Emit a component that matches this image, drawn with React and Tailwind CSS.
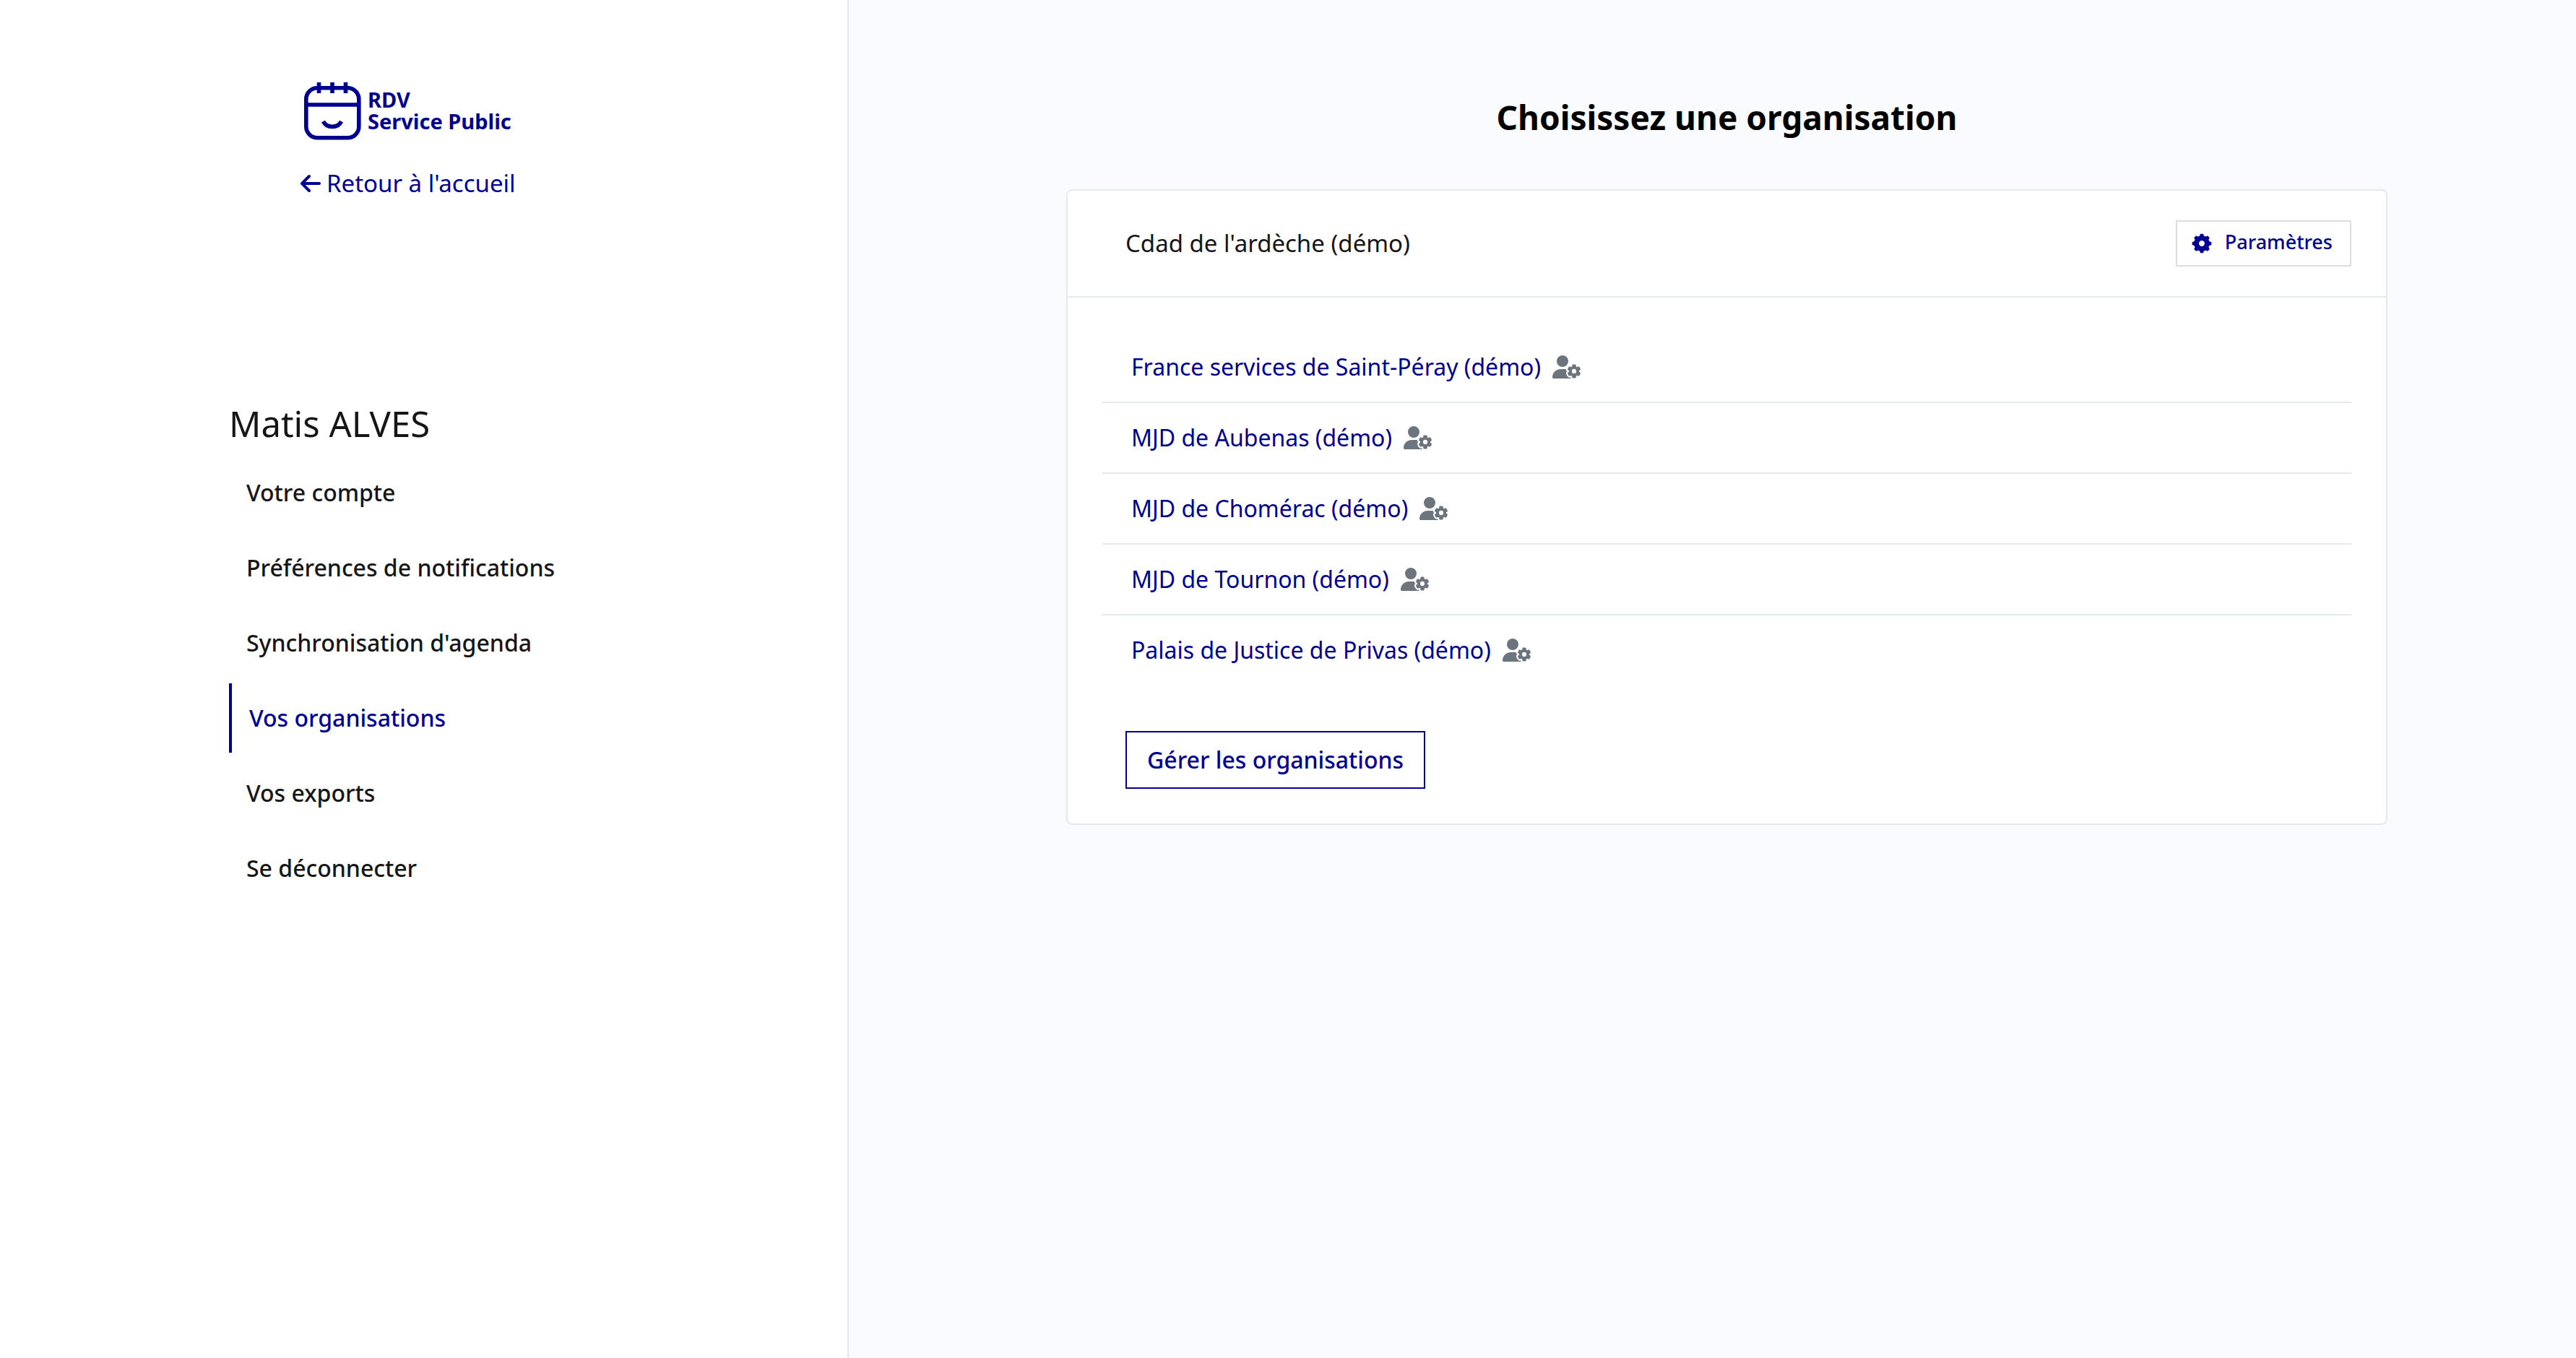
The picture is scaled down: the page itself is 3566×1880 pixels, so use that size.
import { FaArrowLeft, FaUserGear } from "react-icons/fa6";
import { RiSettings5Fill } from "react-icons/ri";

const menu = [
  "Votre compte",
  "Préférences de notifications",
  "Synchronisation d'agenda",
  "Vos organisations",
  "Vos exports",
  "Se déconnecter",
];

const organisations = [
  "France services de Saint-Péray (démo)",
  "MJD de Aubenas (démo)",
  "MJD de Chomérac (démo)",
  "MJD de Tournon (démo)",
  "Palais de Justice de Privas (démo)",
];

function Logo() {
  return (
    <a href="#" className="flex items-center gap-[9px]">
      <svg
        className="h-20 w-20"
        viewBox="0 0 80 80"
        fill="none"
        stroke="currentColor"
        strokeWidth="5.6"
        aria-hidden="true"
      >
        <rect x="3.8" y="7.8" width="73" height="69" rx="15.5" />
        <path d="M3.8 31H76.8M21.5 0V15M40 0V15M58.5 0V15" />
        <path d="M27.5 54C32 63.8 48 63.8 52.5 54" />
      </svg>
      <span className="pb-0.5 text-[29px] leading-[30px] font-bold">
        RDV
        <br />
        Service Public
      </span>
    </a>
  );
}

function Sidebar() {
  return (
    <aside className="border-r-2 border-[#e2e8ee] pt-[114px] pl-[317px]">
      <header className="flex flex-col items-start pl-[99px] text-[#000091]">
        <div className="pl-1">
          <Logo />
        </div>
        <a
          href="#"
          className="mt-9 flex items-center gap-2 text-[33px] leading-[48px]"
        >
          <FaArrowLeft className="h-8 w-7" />
          Retour à l'accueil
        </a>
      </header>
      <h2 className="mt-[276px] text-[49px] leading-[64px]">Matis ALVES</h2>
      <nav className="mt-4 flex flex-col gap-2 leading-[48px] font-medium">
        {menu.map((label) =>
          label === "Vos organisations" ? (
            <a
              key={label}
              href="#"
              aria-current="page"
              className="border-l-4 border-[#000091] py-6 pl-6 text-[#000091]"
            >
              {label}
            </a>
          ) : (
            <a key={label} href="#" className="py-6 pl-6">
              {label}
            </a>
          )
        )}
      </nav>
    </aside>
  );
}

export default function App() {
  return (
    <div className="grid min-h-screen grid-cols-[1175fr_2391fr] bg-white font-['Noto_Sans',sans-serif] text-[32px] text-[#161616]">
      <Sidebar />
      <main className="bg-[#fafbff] pt-[126px] pr-[261px] pl-[301px]">
        <h1 className="text-center text-[46px] leading-[72px] font-bold text-black">
          Choisissez une organisation
        </h1>
        <section className="mt-16 rounded-lg border-2 border-[#e4e9ee] bg-white leading-[48px]">
          <div className="flex items-center justify-between border-b-2 border-[#e4e9ee] py-[41px] pr-12 pl-20">
            <span className="text-[33px]">Cdad de l'ardèche (démo)</span>
            <a
              href="#"
              className="flex h-16 items-center gap-4 border-2 border-[#dddddd] pr-6 pl-[18px] text-[27px] font-medium text-[#000091]"
            >
              <RiSettings5Fill className="size-8" />
              <span className="pb-1">Paramètres</span>
            </a>
          </div>
          <div className="p-12">
            <ul className="divide-y-2 divide-[#e4e9ee]">
              {organisations.map((name) => (
                <li key={name} className="flex items-center gap-4 px-10 py-6">
                  <a href="#" className="text-[#000091]">
                    {name}
                  </a>
                  <FaUserGear className="h-8 w-10 text-[#6c757d]" />
                </li>
              ))}
            </ul>
            <div className="mt-16 flex pl-8">
              <a
                href="#"
                className="flex h-20 items-center border-2 border-[#000091] px-7 font-medium text-[#000091]"
              >
                Gérer les organisations
              </a>
            </div>
          </div>
        </section>
      </main>
    </div>
  );
}
